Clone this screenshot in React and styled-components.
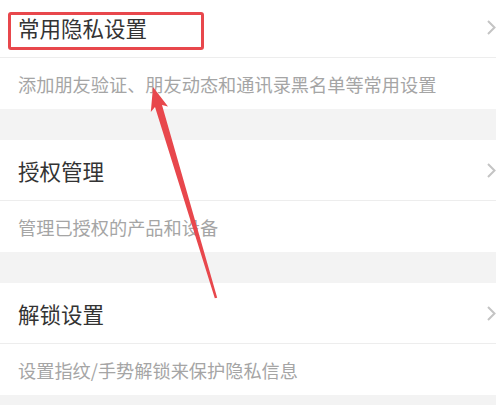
import React from 'react';
import styled, { createGlobalStyle } from 'styled-components';

const GlobalStyle = createGlobalStyle`
  html, body {
    margin: 0;
    padding: 0;
    background: #f3f3f3;
  }
  body {
    font-family: 'Noto Sans CJK SC', 'Noto Sans', sans-serif;
  }
`;

const sections = [
  { title: '常用隐私设置', desc: '添加朋友验证、朋友动态和通讯录黑名单等常用设置' },
  { title: '授权管理', desc: '管理已授权的产品和设备' },
  { title: '解锁设置', desc: '设置指纹/手势解锁来保护隐私信息' },
];

const App = () => {
  return (
    <Screen>
      <GlobalStyle />
      <List>
        {sections.map((s) => (
          <Section key={s.title}>
            <TitleRow>
              <Title>{s.title}</Title>
              <Chevron viewBox="0 0 9 15">
                <path d="M1 1 L7.5 7.5 L1 14" />
              </Chevron>
            </TitleRow>
            <DescRow>{s.desc}</DescRow>
          </Section>
        ))}
      </List>
      <Highlight />
      <Arrow viewBox="0 0 496 405">
        <polygon points="153,87 168,106.5 162,105 217.2,297.7 214.8,298.3 155,107 150.8,112" />
      </Arrow>
    </Screen>
  );
};

const Screen = styled.div`
  position: relative;
  width: 496px;
  height: 405px;
  overflow: hidden;
  background: #f3f3f3;
`;

const List = styled.div`
  display: flex;
  flex-direction: column;
  gap: 31px;
  margin-top: -3px;
`;

const Section = styled.div`
  background: #ffffff;
  display: flex;
  flex-direction: column;
`;

const TitleRow = styled.div`
  height: 60px;
  display: flex;
  align-items: center;
  justify-content: space-between;
  padding-left: 18px;
  border-bottom: 1px solid #ededed;
`;

const Title = styled.span`
  font-size: 21.5px;
  color: #333333;
`;

const Chevron = styled.svg`
  width: 9px;
  height: 15px;
  fill: none;
  stroke: #c4c4c4;
  stroke-width: 2;
`;

const DescRow = styled.div`
  height: 51px;
  display: flex;
  align-items: center;
  padding-left: 18px;
  font-size: 18.2px;
  color: #a5a5a5;
`;

const Highlight = styled.div`
  position: absolute;
  left: 8px;
  top: 12px;
  width: 196px;
  height: 38px;
  box-sizing: border-box;
  border: 3px solid #e8474c;
  border-radius: 3px;
`;

const Arrow = styled.svg`
  position: absolute;
  left: 0;
  top: 0;
  width: 496px;
  height: 405px;
  fill: #e8474c;
`;

export default App;
